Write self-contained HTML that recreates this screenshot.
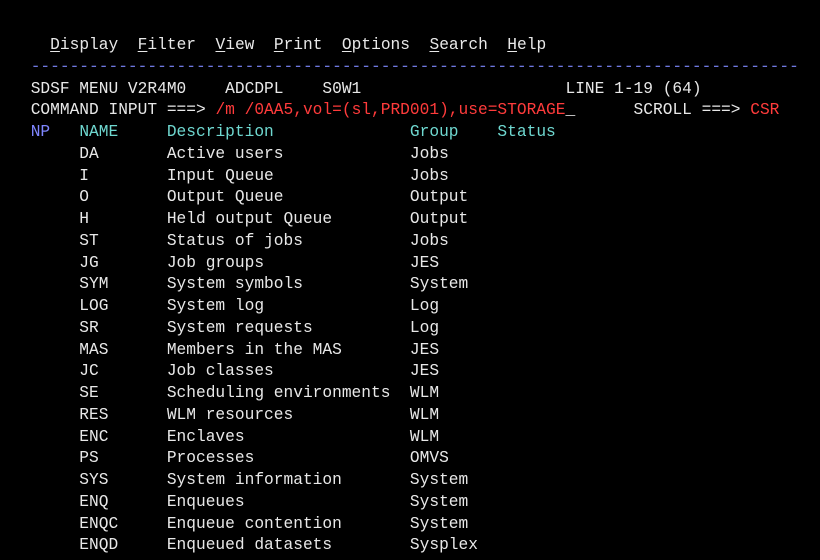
<!DOCTYPE html>
<html><head><meta charset="utf-8"><style>
html,body{margin:0;padding:0;background:#000;width:820px;height:560px;overflow:hidden}
pre{position:absolute;left:30.7px;top:35px;margin:0;font-family:"Liberation Mono",monospace;font-size:16.22px;line-height:21.75px;color:#e8e8e8;}
.b{color:#7f86ff}.t{color:#6fd8d0}.r{color:#ff3b3b}.d{color:#6f78e0}
u{text-decoration:underline;text-underline-offset:2px}
</style></head><body>
<pre>  <u>D</u>isplay  <u>F</u>ilter  <u>V</u>iew  <u>P</u>rint  <u>O</u>ptions  <u>S</u>earch  <u>H</u>elp
<span class="d">-------------------------------------------------------------------------------</span>
SDSF MENU V2R4M0    ADCDPL    S0W1                     LINE 1-19 (64)
COMMAND INPUT ===> <span class="r">/m /0AA5,vol=(sl,PRD001),use=STORAGE</span>_      SCROLL ===> <span class="r">CSR</span>
<span class="b">NP</span>   <span class="t">NAME     Description              Group    Status</span>
     DA       Active users             Jobs
     I        Input Queue              Jobs
     O        Output Queue             Output
     H        Held output Queue        Output
     ST       Status of jobs           Jobs
     JG       Job groups               JES
     SYM      System symbols           System
     LOG      System log               Log
     SR       System requests          Log
     MAS      Members in the MAS       JES
     JC       Job classes              JES
     SE       Scheduling environments  WLM
     RES      WLM resources            WLM
     ENC      Enclaves                 WLM
     PS       Processes                OMVS
     SYS      System information       System
     ENQ      Enqueues                 System
     ENQC     Enqueue contention       System
     ENQD     Enqueued datasets        Sysplex
</pre>
</body></html>
